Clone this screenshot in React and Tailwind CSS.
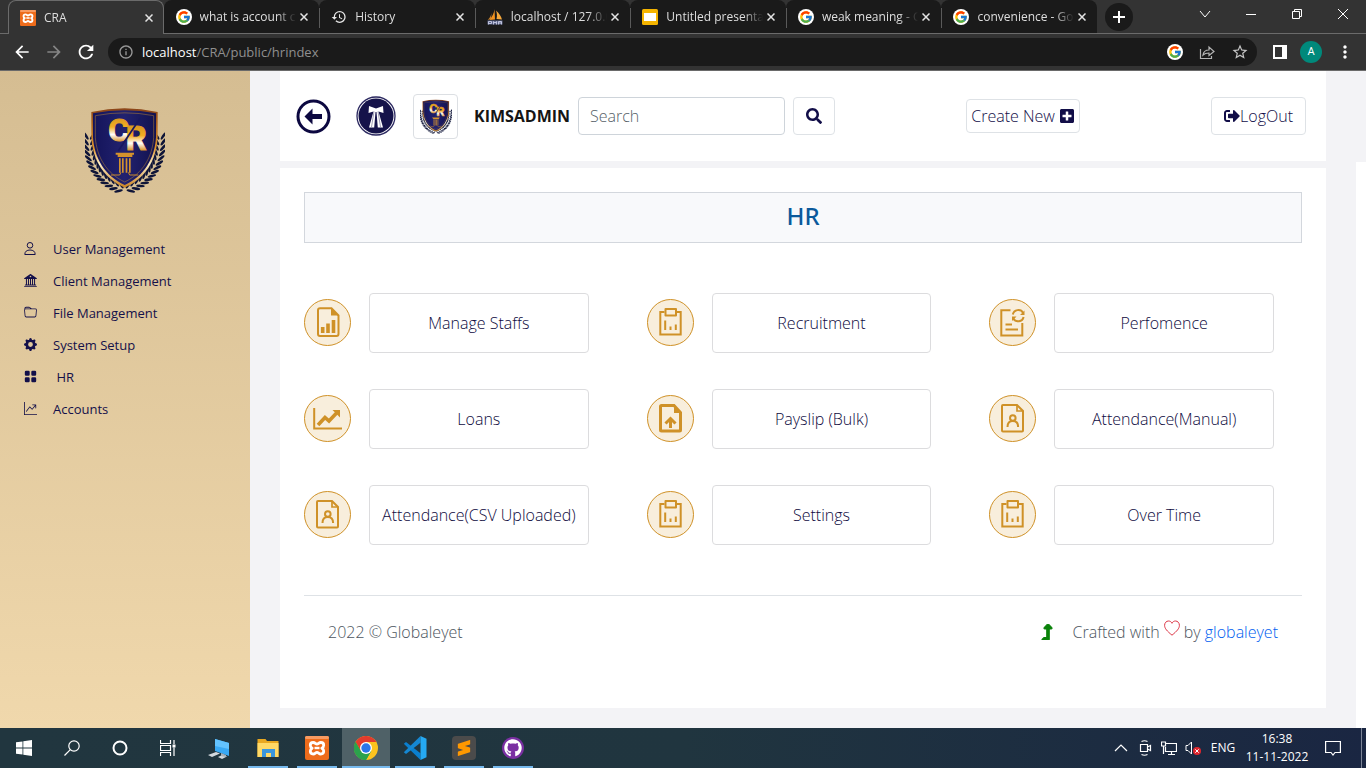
import React from "react";
import { BsBank2, BsFolder, BsGearFill, BsGridFill, BsGraphUpArrow } from "react-icons/bs";
import { FaSearch, FaPlusSquare, FaSignOutAlt, FaLevelUpAlt, FaGithub } from "react-icons/fa";
import { FcGoogle } from "react-icons/fc";
import { SiSublimetext } from "react-icons/si";
import { MdHistory, MdArrowBack, MdArrowForward, MdRefresh, MdInfoOutline, MdStarBorder, MdMoreVert } from "react-icons/md";

/* ---------- browser icons ---------- */

const GoogleMark = () => (
  <span className="flex size-4 items-center justify-center rounded-full bg-white">
    <FcGoogle className="size-3.5" />
  </span>
);

const XamppMark = ({ className }) => (
  <svg viewBox="0 0 24 24" className={className} aria-hidden="true">
    <rect width="24" height="24" rx="2" fill="#ee6c1b" />
    <rect width="24" height="3" rx="1.5" fill="#f79b62" />
    <path
      d="M8.200 6.500C6.200 6.500 5.300 7.800 5.300 9.300c0 1.500.9 2.400 1.900 2.900-1 .5-1.900 1.500-1.900 2.900 0 1.600.9 2.900 2.900 2.900s2.300-1.600 3.800-1.600 1.800 1.600 3.800 1.600 2.900-1.300 2.900-2.900c0-1.400-.9-2.400-1.900-2.900 1-.5 1.900-1.400 1.900-2.900 0-1.500-.9-2.800-2.900-2.800S13.500 8.200 12 8.200 10.200 6.500 8.200 6.500z"
      fill="none" stroke="#fff" strokeWidth="2.800" strokeLinejoin="round"
    />
    <path d="M9.500 12h5" stroke="#fff" strokeWidth="2.400" />
  </svg>
);

const PmaMark = () => (
  <svg viewBox="0 0 16 16" className="size-4" aria-hidden="true">
    <path d="M7.500.3L8 10.500 2.500 11C5 8 7 4.500 7.500.300z" fill="#f5931e" />
    <path d="M9 1.500C12 4 14 7 15 10.500L9.500 10c.8-3 .5-6-.5-8.500z" fill="#f7a93c" />
    <path d="M4.500 4L4 10 .8 11C2.500 9 4 7 4.500 4z" fill="#c9802b" />
    <path d="M.5 11.500h15v4H.5z" fill="#5c6488" />
    <path d="M1.500 15.500v-3h3v2h-3M6.500 15.500v-3L8 14l1.500-1.500v3M11.500 15.500v-3h3v3M11.500 14h3" fill="none" stroke="#c8cce4" strokeWidth=".9" />
  </svg>
);

const SlidesMark = () => (
  <svg viewBox="0 0 16 16" className="size-4" aria-hidden="true">
    <rect width="16" height="16" rx="1.500" fill="#f5b400" />
    <rect x="2" y="4" width="12" height="8" fill="#fff" />
  </svg>
);

const CloseX = () => (
  <svg viewBox="0 0 8 8" className="size-2" aria-hidden="true">
    <path d="M.5.500l7 7M7.500.500l-7 7" stroke="#e4e4e4" strokeWidth="1.500" />
  </svg>
);

const tabs = [
  { title: "CRA", icon: <XamppMark className="size-4" />, active: true },
  { title: "what is account code", icon: <GoogleMark /> },
  { title: "History", icon: <MdHistory className="size-4 text-[#e8e8e8]" /> },
  { title: "localhost / 127.0.0.1", icon: <PmaMark /> },
  { title: "Untitled presentation", icon: <SlidesMark /> },
  { title: "weak meaning - Google", icon: <GoogleMark /> },
  { title: "convenience - Google", icon: <GoogleMark /> },
];

function Tab({ title, icon, active, divided }) {
  return (
    <div
      className={
        active
          ? "relative z-10 flex h-[34px] min-w-0 flex-1 items-center rounded-t-lg border border-b-0 border-[#6b6b6b] bg-[#333333] pl-[11px] pr-[6px]"
          : "relative flex h-[33px] min-w-0 flex-1 items-center rounded-t-lg bg-[#1a1a1a] pl-3 pr-[7px]"
      }
    >
      {divided && <span className="absolute left-0 top-2 h-5 w-px bg-[#5a5a5a]" />}
      <button type="button" className="flex min-w-0 flex-1 items-center gap-2 text-left">
        <span className="shrink-0">{icon}</span>
        <span className="min-w-0 flex-1 overflow-hidden whitespace-nowrap text-[12px] leading-4 text-[#dedede] [mask-image:linear-gradient(to_right,#000_80%,transparent)]">
          {title}
        </span>
      </button>
      <button type="button" aria-label={"Close " + title} className="flex size-4 shrink-0 items-center justify-center">
        <CloseX />
      </button>
    </div>
  );
}

function Browser() {
  return (
    <header className="shrink-0 bg-[#333333]">
      <div className="flex h-[34px] items-start justify-between border-b border-[#6b6b6b] pl-2">
        <div className="flex min-w-0 max-w-[1136px] flex-1">
          <nav aria-label="Tabs" className="flex min-w-0 flex-1">
            {tabs.map((t, i) => (
              <Tab key={t.title} {...t} divided={i > 1} />
            ))}
          </nav>
          <div className="flex h-[33px] w-[47px] items-center pl-2">
            <button type="button" aria-label="New tab" className="flex size-7 items-center justify-center rounded-full bg-[#1a1a1a]">
              <svg viewBox="0 0 12 12" className="size-3"><path d="M6 0v12M0 6h12" stroke="#fff" strokeWidth="2" /></svg>
            </button>
          </div>
        </div>
        <div className="flex h-7 shrink-0">
          <button type="button" aria-label="Search tabs" className="flex w-[46px] items-center justify-center">
            <svg viewBox="0 0 12 12" className="size-3"><path d="M1 3l5 6 5-6" fill="none" stroke="#fff" /></svg>
          </button>
          <button type="button" aria-label="Minimize" className="flex w-[46px] items-center justify-center">
            <svg viewBox="0 0 10 10" className="size-2.5"><path d="M0 5.500h10" stroke="#fff" /></svg>
          </button>
          <button type="button" aria-label="Restore" className="flex w-[46px] items-center justify-center">
            <svg viewBox="0 0 10 10" className="size-2.5"><path d="M.5 2.500h7v7h-7zM2.500 2.500v-2h7v7h-2" fill="none" stroke="#fff" /></svg>
          </button>
          <button type="button" aria-label="Close window" className="flex w-[46px] items-center justify-center">
            <svg viewBox="0 0 10 10" className="size-2.5"><path d="M0 0l10 10M10 0L0 10" stroke="#fff" /></svg>
          </button>
        </div>
      </div>
      <div className="flex h-[37px] items-center border-b border-[#6a6a6a] pl-[11px] pr-[11px]">
        <div className="flex gap-[10px] pr-[11px]">
          <button type="button" aria-label="Back"><MdArrowBack className="size-[22px] p-px text-white" /></button>
          <button type="button" aria-label="Forward"><MdArrowForward className="size-[22px] p-px text-[#858585]" /></button>
          <button type="button" aria-label="Reload"><MdRefresh className="size-[22px] text-white" /></button>
        </div>
        <div className="flex h-7 flex-1 items-center rounded-full bg-[#1a1a1a] pl-[10px] pr-2">
          <MdInfoOutline className="size-4 text-[#9a9a9a]" />
          <p className="flex-1 pl-2 text-[13px] leading-5 text-[#8f8f8f]">
            <span className="text-white">localhost</span>/CRA/public/hrindex
          </p>
          <div className="flex items-center gap-4">
            <button type="button" aria-label="Search with Google"><GoogleMark /></button>
            <button type="button" aria-label="Share">
              <svg viewBox="0 0 16 16" className="size-4"><path d="M1.500 5v9.500h11V12M4 11c.5-3.500 3-5 6-5V3l5 4.500-5 4V9c-2.500 0-4.500.500-6 2z" fill="none" stroke="#b4b4b4" strokeWidth="1.200" /></svg>
            </button>
            <button type="button" aria-label="Bookmark"><MdStarBorder className="size-[18px] text-[#c4c4c4]" /></button>
          </div>
        </div>
        <div className="flex items-center gap-[13px] pl-4">
          <button type="button" aria-label="Side panel">
            <svg viewBox="0 0 14 14" className="size-[14px]"><path d="M0 0h14v14H0zM2 2v10h7V2z" fill="#fff" fillRule="evenodd" /></svg>
          </button>
          <button type="button" aria-label="Profile" className="flex size-[22px] items-center justify-center rounded-full bg-[#00897b] font-[Roboto] text-[11px] text-white">A</button>
          <button type="button" aria-label="Menu"><MdMoreVert className="size-5 text-white" /></button>
        </div>
      </div>
    </header>
  );
}

/* ---------- brand drawings ---------- */

const leaves = Array.from({ length: 14 }, (_, i) => {
  const t = i / 13;
  const x = (1 - t) * (1 - t) * 43 + 2 * (1 - t) * t * 40 + t * t * 138;
  const y = (1 - t) * (1 - t) * 120 + 2 * (1 - t) * t * 235 + t * t * 273;
  const dx = 2 * (1 - t) * -3 + 2 * t * 98;
  const dy = 2 * (1 - t) * 115 + 2 * t * 38;
  return { x, y, a: (Math.atan2(dy, dx) * 180) / Math.PI + 180 };
});

const Laurel = () =>
  leaves.map((l, i) => (
    <g key={i} transform={`translate(${l.x} ${l.y}) rotate(${l.a})`} fill="#0f1538">
      <ellipse cx="9" cy="-6" rx="13" ry="4" transform="rotate(-34)" />
      <ellipse cx="9" cy="6" rx="13" ry="4" transform="rotate(34)" />
    </g>
  ));

function Crest({ id, className }) {
  return (
    <svg viewBox="30 30 240 256" className={className} role="img" aria-label="CR crest">
      <defs>
        <linearGradient id={id + "-gold"} x1="0" y1="0" x2="0" y2="1">
          <stop offset="0" stopColor="#8a4418" />
          <stop offset=".5" stopColor="#e0932a" />
          <stop offset=".7" stopColor="#fff0c8" />
          <stop offset="1" stopColor="#c9811f" />
        </linearGradient>
        <linearGradient id={id + "-text"} x1="0" y1="0" x2="0" y2="1">
          <stop offset=".2" stopColor="#dc9a20" />
          <stop offset=".42" stopColor="#f2ae22" />
          <stop offset=".62" stopColor="#ffffff" />
          <stop offset=".82" stopColor="#d98d1c" />
        </linearGradient>
        <linearGradient id={id + "-navy"} x1="0" x2="1">
          <stop offset="0" stopColor="#14145a" />
          <stop offset=".5" stopColor="#22226f" />
          <stop offset="1" stopColor="#13124f" />
        </linearGradient>
      </defs>
      <Laurel />
      <g transform="translate(298 0) scale(-1 1)"><Laurel /></g>
      <path d="M49 44Q149 22 248 44V120C244 190 210 245 149 271C88 245 53 190 49 120z" fill={`url(#${id}-gold)`} />
      <path d="M54 48Q149 29 243 48V120C239 184 208 236 149 263C90 236 58 184 54 120z" fill={`url(#${id}-navy)`} />
      <path d="M61 55Q149 38 236 55V120C232 180 203 228 149 254C95 228 65 180 61 120z" fill="none" stroke="#b98434" strokeWidth="1.500" />
      <g fontFamily="'Liberation Sans Narrow', Roboto, sans-serif" fontWeight="700" stroke={`url(#${id}-text)`} strokeWidth="3" fill={`url(#${id}-text)`}>
        <text x="100" y="131" fontSize="96">C</text>
        <text x="152" y="157" fontSize="98">R</text>
      </g>
      <path d="M196 62L130 160" stroke="#181860" strokeWidth="5" />
      <path d="M122 166h55v6h-5v7h-44v-7h-6zM132 183h5v43h-5zM141 183h5v43h-5zM152 183h5v43h-5zM162 183h5v43h-5z" fill="#d4922c" />
      <path d="M108 233h26l4-8M190 233h-26l-4-8" fill="none" stroke="#c98a2c" strokeWidth="3" />
    </svg>
  );
}

const BackMark = () => (
  <svg viewBox="0 0 35 35" className="size-[35px]" aria-hidden="true">
    <circle cx="17.500" cy="17.500" r="15.500" fill="none" stroke="#0c0840" strokeWidth="3" />
    <path d="M8.500 17.500L16.500 9.500V15h9.500v5h-9.500v5.500z" fill="#0c0840" />
  </svg>
);

const BandMark = () => (
  <svg viewBox="0 0 40 40" className="size-10" aria-hidden="true">
    <circle cx="20" cy="20" r="19" fill="#fff" stroke="#2b2860" strokeWidth="1.300" />
    <circle cx="20" cy="20" r="17.500" fill="#15134a" />
    <path d="M20 12.500L13 10l-.5 7 5-1.500L13 31.500h5.200L19.500 16h1l1.300 15.500H27L22.500 15.500l5 1.500-.5-7z" fill="#fff" />
    <path d="M18 15.500L15.500 31M22 15.500L24.500 31" stroke="#777596" strokeWidth=".7" />
  </svg>
);

/* ---------- module icons ---------- */

const Ring = ({ children }) => (
  <svg viewBox="0 0 47 47" className="mb-0.5 size-[47px] shrink-0" aria-hidden="true" fill="none" stroke="#cf9127" strokeWidth="2">
    <circle cx="23.500" cy="23.500" r="23" fill="#f8eedc" strokeWidth="1" />
    {children}
  </svg>
);
const ReportIcon = () => (
  <Ring>
    <path d="M16 9.200h11.500l7 7.300V35a2 2 0 0 1-2 2H16a2 2 0 0 1-2-2V11.200a2 2 0 0 1 2-2z" />
    <path d="M27 9l7.500 7.500H27z" fill="#cf9127" strokeWidth="0" />
    <path d="M18.700 28v6M24 24.500V34M29.500 21v13" strokeWidth="3.600" />
  </Ring>
);
const ClipboardIcon = () => (
  <Ring>
    <path d="M17.500 13H13.300v22.500h20.400V13h-4.200" />
    <path d="M18.500 10h10.500v6.500H18.500z" strokeLinejoin="round" />
    <path d="M18.200 21.500v9.500M23.500 27.500V31M28.800 25.500V31" />
  </Ring>
);
const SyncIcon = () => (
  <Ring>
    <path d="M21.500 11.300H12.300v25.200h21V24" />
    <path d="M16.500 25.500h6.500M16.500 30.500H29" />
    <path d="M23.800 15.500a5.600 5.600 0 0 1 10.400-1.500M34.600 18a5.600 5.600 0 0 1-10.300 1.500" />
    <path d="M35.500 11.500v4.500h-4.500zM23 22v-4.500h4.500z" fill="#cf9127" strokeWidth="0" />
  </Ring>
);
const TrendIcon = () => (
  <Ring>
    <path d="M10.200 13v20.500H38" />
    <path d="M14 30l7-7.500 4 3.500 8.500-9" strokeWidth="3.600" />
    <path d="M28.500 15h7.500v7.500z" fill="#cf9127" strokeWidth="0" />
  </Ring>
);
const UploadIcon = () => (
  <Ring>
    <path d="M14.500 10.500H27l6.500 7V35a1 1 0 0 1-1 1h-18a1 1 0 0 1-1-1V11.500a1 1 0 0 1 1-1z" strokeWidth="3" />
    <path d="M27 9.500l8 8.500h-8z" fill="#cf9127" strokeWidth="0" />
    <path d="M23.500 33v-9M18.500 28.500l5-5 5 5" strokeWidth="3" />
  </Ring>
);
const PersonFileIcon = () => (
  <Ring>
    <path d="M14 10h14l6 6v19.500a1 1 0 0 1-1 1H14a1 1 0 0 1-1-1V11a1 1 0 0 1 1-1z" />
    <path d="M28 10v6h6" strokeWidth="1.700" />
    <circle cx="23.800" cy="23" r="2.800" />
    <path d="M18.500 32c0-3.800 2-6 5.300-6s5.300 2.200 5.300 6" />
  </Ring>
);

const modules = [
  ["Manage Staffs", ReportIcon],
  ["Recruitment", ClipboardIcon],
  ["Perfomence", SyncIcon],
  ["Loans", TrendIcon],
  ["Payslip (Bulk)", UploadIcon],
  ["Attendance(Manual)", PersonFileIcon],
  ["Attendance(CSV Uploaded)", PersonFileIcon],
  ["Settings", ClipboardIcon],
  ["Over Time", ClipboardIcon],
];

const PersonOutline = ({ className }) => (
  <svg viewBox="0 0 13 13" className={className} fill="none" stroke="currentColor" aria-hidden="true">
    <circle cx="6" cy="3.300" r="2.800" />
    <path d="M.8 12.500c0-3 2-4.500 5.200-4.500s5.200 1.500 5.200 4.500z" strokeLinejoin="round" />
  </svg>
);

const links = [
  ["User Management", PersonOutline],
  ["Client Management", BsBank2],
  ["File Management", BsFolder],
  ["System Setup", BsGearFill],
  ["\u00a0HR", BsGridFill],
  ["Accounts", BsGraphUpArrow],
];

function Sidebar() {
  return (
    <aside className="flex w-[250px] shrink-0 flex-col bg-linear-to-b from-[#d5bd92] to-[#f0d8ac]">
      <div className="flex justify-center pt-9">
        <Crest id="side" className="h-[86px] w-20" />
      </div>
      <nav aria-label="Main" className="flex flex-col pt-[41px]">
        {links.map(([label, Icon]) => (
          <a key={label} href="#" className="flex h-8 items-center gap-4 pl-6 text-[13px] text-[#14104a]">
            <Icon className="mb-1 size-[13px]" />
            {label}
          </a>
        ))}
      </nav>
    </aside>
  );
}

function TopBar() {
  return (
    <div className="flex h-[90px] shrink-0 items-center justify-between bg-white pl-4 pr-5 text-[#120e48]">
      <div className="flex items-center">
        <button type="button" aria-label="Go back" className="mr-[25px]"><BackMark /></button>
        <button type="button" aria-label="Advocates" className="mr-[17px]"><BandMark /></button>
        <div className="mr-4 flex size-[45px] items-center justify-center rounded border border-[#dcdfe3]">
          <Crest id="head" className="h-[35px] w-8" />
        </div>
        <strong className="mr-2 w-24 text-base font-bold text-[#151515]">KIMSADMIN</strong>
        <input
          type="text"
          aria-label="Search"
          placeholder="Search"
          className="mr-2 h-[38px] w-[207px] rounded border border-[#ced4da] px-[11px] text-base font-light placeholder:text-[#565f68]"
        />
        <button type="button" aria-label="Submit search" className="flex h-[38px] w-[42px] items-center justify-center rounded border border-[#dee2e6]">
          <FaSearch className="size-4" />
        </button>
      </div>
      <button type="button" className="flex h-[34px] items-center gap-1 rounded border border-[#dee2e6] px-1 text-base font-light">
        Create New <FaPlusSquare className="size-4" />
      </button>
      <button type="button" className="flex h-[38px] items-center rounded border border-[#dee2e6] px-3 text-base font-light">
        <FaSignOutAlt className="size-4" />LogOut
      </button>
    </div>
  );
}

function Main() {
  return (
    <main className="flex min-w-0 flex-1 flex-col pb-5">
      <TopBar />
      <section className="mt-[7px] flex flex-1 flex-col bg-white px-6 pt-6">
        <h1 className="flex h-[51px] items-center justify-center border border-[#d3d7dd] bg-[#f8f9fb] pb-1 font-['Noto_Sans'] text-2xl font-medium text-[#0b5a9c]">
          HR
        </h1>
        <div className="grid grid-cols-3 gap-x-[58px] gap-y-9 pr-7 pt-[50px]">
          {modules.map(([label, Icon]) => (
            <div key={label} className="flex items-center gap-[18px]">
              <Icon />
              <button type="button" className="h-[60px] min-w-0 flex-1 whitespace-nowrap rounded border border-[#dcdcde] text-base font-light text-[#0e0a40]">
                {label}
              </button>
            </div>
          ))}
        </div>
        <footer className="mt-[50px] flex items-center justify-between border-t border-[#dee2e6] px-6 pt-6 text-base font-light leading-6 text-[#4c555e]">
          <p>2022 © Globaleyet</p>
          <p className="flex items-center">
            <FaLevelUpAlt className="mr-[18px] size-4 text-[#0a820a]" stroke="currentColor" strokeWidth="36" />
            Crafted with
            <svg viewBox="0 0 16 16" className="mx-1 mb-2 size-4" role="img" aria-label="love">
              <path d="M8 15.200C3 11 .6 8.500.6 5.300.6 2.800 2.400 1 4.500 1 6 1 7.300 1.800 8 3.300 8.700 1.800 10 1 11.500 1c2.100 0 3.900 1.800 3.900 4.300 0 3.200-2.400 5.700-7.400 9.900z" fill="none" stroke="#dc3545" />
            </svg>
            by&nbsp;<a href="#" className="text-[#0060f0]">globaleyet</a>
          </p>
        </footer>
      </section>
    </main>
  );
}

/* ---------- taskbar ---------- */

const PcMark = () => (
  <svg viewBox="0 0 24 24" className="size-6">
    <path d="M8 2l14 4v13L8 14z" fill="#39a9f4" /><path d="M8 2l14 4v6L8 9z" fill="#63c3ff" />
    <path d="M1 18l8-3 4 1.500-8 3.500zM11 20l5-2.500 4 2-5 2.500z" fill="#d3d9de" /><path d="M14 16v3l5 1v-2" fill="#a7b0b8" />
  </svg>
);
const FolderMark = () => (
  <svg viewBox="0 0 24 24" className="size-6">
    <path d="M1.500 3h8l1.500 2h11.500v16h-21z" fill="#e9a820" /><path d="M1.500 7h21v14h-21z" fill="#ffd966" />
    <path d="M6 21v-8h13v8h-4v-4h-5v4z" fill="#3a96dd" />
  </svg>
);
const ChromeMark = () => (
  <svg viewBox="0 0 24 24" className="size-6">
    <circle cx="12" cy="12" r="12" fill="#fcc31e" />
    <path d="M12 12L1.600 6A12 12 0 0 1 22.400 6H12z" fill="#e33b2e" />
    <path d="M1.600 6A12 12 0 0 0 12 24l5.200-9L12 12 6.800 15z" fill="#2ba24c" />
    <path d="M1.600 6L6.800 15 12 12V6z" fill="#e33b2e" />
    <path d="M1.600 6l5.200 9a6 6 0 0 0 5.200 3l5.200-3-5.200 9A12 12 0 0 1 1.600 6z" fill="#2ba24c" />
    <circle cx="12" cy="12" r="6" fill="#fff" /><circle cx="12" cy="12" r="4.700" fill="#2a76ea" />
  </svg>
);
const CodeMark = () => (
  <svg viewBox="0 0 24 24" className="size-6">
    <path d="M17.500 17.200L3 6 .8 7.800 17.500 24z" fill="#0a7fcf" />
    <path d="M17.500 6.800L3 18 .8 16.200 17.500 0z" fill="#1587d2" />
    <path d="M17.500 0l6 2.800v18.400l-6 2.800z" fill="#25a9f2" />
  </svg>
);
const SublimeMark = () => (
  <span className="flex size-6 items-center justify-center rounded-sm bg-[#4b4b4b]"><SiSublimetext className="size-4 text-[#ff9800]" /></span>
);
const HubMark = () => (
  <span className="flex size-[22px] items-center justify-center rounded-full bg-[#7b30a3]"><FaGithub className="size-[18px] text-white" /></span>
);

const apps = [
  ["This PC", <PcMark />, "h-full w-10"],
  ["File Explorer", <FolderMark />, "h-full w-10 border-b-2 border-[#76b9ed]"],
  ["XAMPP", <XamppMark className="size-6" />, "h-full w-10 border-b-2 border-[#76b9ed]"],
  ["Chrome", <ChromeMark />, "h-full w-12 border-b-2 border-[#76b9ed] bg-[#4f6167]"],
  ["Visual Studio Code", <CodeMark />, "h-full w-10 border-b-2 border-[#76b9ed]"],
  ["Sublime Text", <SublimeMark />, "h-full w-10 border-b-2 border-[#76b9ed]"],
  ["GitHub Desktop", <HubMark />, "h-full w-10 border-b-2 border-[#76b9ed]"],
];

const Thin = ({ children }) => (
  <svg viewBox="0 0 16 16" className="size-4" fill="none" stroke="#fff" strokeWidth="1.200">{children}</svg>
);

const system = [
  ["Start", <svg viewBox="0 0 16 16" className="size-4" fill="#fff"><path d="M0 2.300l6.500-.9v6.100H0zM7.300 1.300L16 0v7.500H7.300zM0 8.500h6.500v6.100L0 13.700zM7.300 8.500H16V16l-8.700-1.300z" /></svg>],
  ["Search", <Thin><circle cx="10" cy="6" r="5.200" /><path d="M6.300 9.700L.5 15.500" /></Thin>],
  ["Cortana", <Thin><circle cx="8" cy="8" r="6.500" strokeWidth="2" /></Thin>],
  ["Task view", <Thin><path d="M.5 0v3.500h10V0M.5 16v-3.500h10V16M.5 5.500h10v5H.5zM14 0v4M14 7.500V16" /><path d="M12.500 4.500h3v3h-3z" fill="#fff" strokeWidth="0" /></Thin>],
];

function Taskbar() {
  return (
    <footer className="flex h-10 shrink-0 items-center justify-between bg-linear-to-r from-[#21363f] via-[#20353f] to-[#1a2642] text-[12px] text-white">
      <div className="flex h-full">
        {system.map(([label, icon]) => (
          <button key={label} type="button" aria-label={label} className="flex w-12 items-center justify-center">{icon}</button>
        ))}
        <div className="ml-[2px] flex h-full">
          {apps.map(([label, icon, look]) => (
            <div key={label} className="flex h-full w-[49px] justify-center">
              <button type="button" aria-label={label} className={look}>
                <span className="flex items-center justify-center pt-px">{icon}</span>
              </button>
            </div>
          ))}
        </div>
      </div>
      <div className="flex h-full items-center">
        <div className="flex items-center gap-2">
          <Thin><path d="M2 11l6-6 6 6" /></Thin>
          <Thin><path d="M3.500 4.500h7v7h-7zM10.500 7l3-1.500v5l-3-1.500M4.500 1.500q3-1.500 6 0M4.500 14.500q3 1.500 6 0" /></Thin>
          <Thin><path d="M5 3.500h10.500v8H4.500V7M7 14.500h7M10.500 11.500v3M.5 2h4v4h-4zM2.500 6v8" /></Thin>
          <svg viewBox="0 0 16 16" className="size-4"><path d="M1 5.500h2L6.500 2v12L3 10.500H1z" fill="none" stroke="#fff" /><circle cx="12" cy="11" r="4" fill="#e0262d" /><path d="M10.300 9.300l3.400 3.400M13.700 9.300l-3.400 3.400" stroke="#fff" /></svg>
        </div>
        <span className="w-11 text-center">ENG</span>
        <div className="w-16 whitespace-nowrap text-center leading-[18px]">
          <p>16:38</p>
          <p>11-11-2022</p>
        </div>
        <button type="button" aria-label="Notifications" className="flex w-12 justify-center">
          <Thin><path d="M.6 1.500h14.800v11H10L8 15l-2-2.500H.6z" /></Thin>
        </button>
        <span className="ml-1 mr-1 h-full w-px bg-[#7c8496]" />
      </div>
    </footer>
  );
}

export default function App() {
  return (
    <div className="flex min-h-screen flex-col font-['Open_Sans','Noto_Sans',sans-serif]">
      <Browser />
      <div className="flex flex-1 bg-[#f3f3f6]">
        <Sidebar />
        <div className="flex min-w-0 flex-1 gap-[30px] pl-[30px]">
          <Main />
          <div className="mt-[91px] w-[10px] shrink-0 bg-white" />
        </div>
      </div>
      <Taskbar />
    </div>
  );
}
